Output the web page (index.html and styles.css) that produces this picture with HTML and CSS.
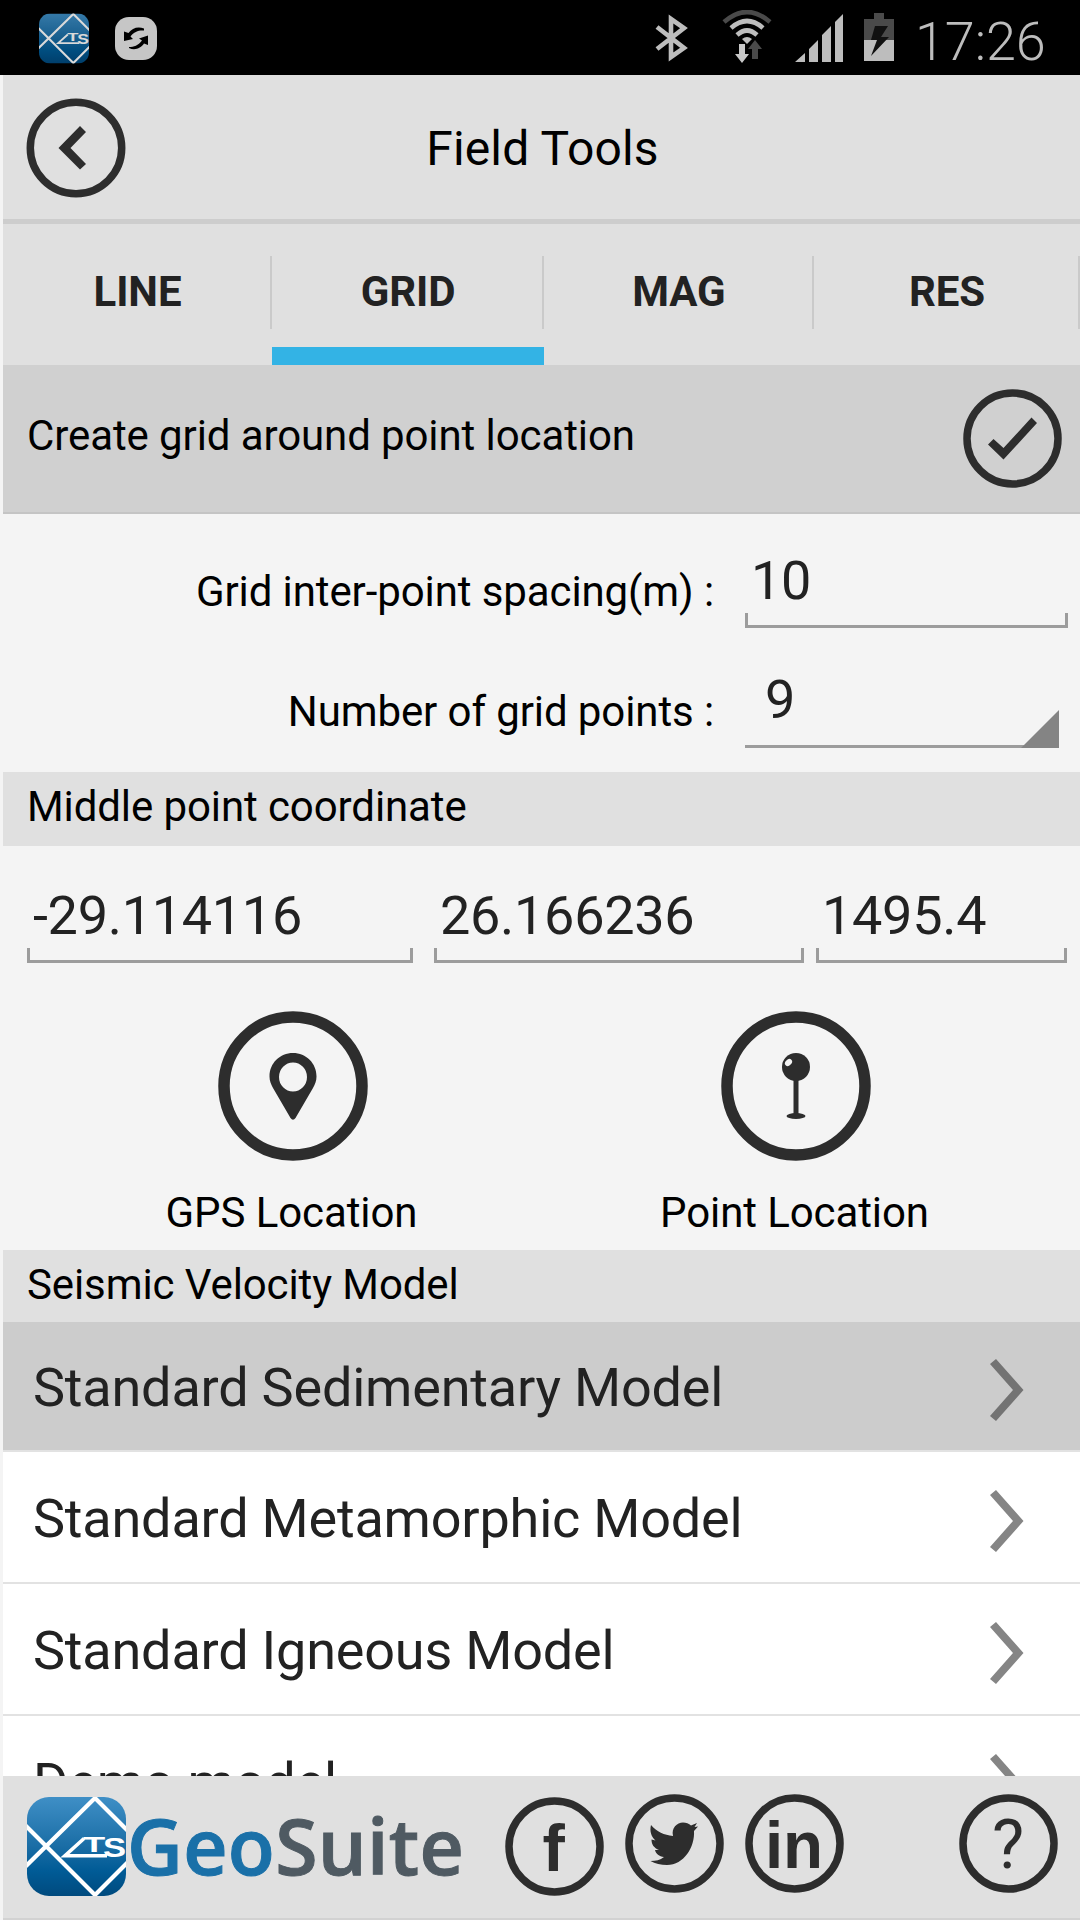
FILE: index.html
```html
<!doctype html>
<html lang="en">
<head>
  <meta charset="UTF-8">
  <meta name="viewport" content="width=device-width, initial-scale=1.0">
  <title>Field Tools</title>
  <link rel="stylesheet" href="styles.css">
</head>
<body>
  <svg width="0" height="0" class="defs">
    <defs>
      <linearGradient id="blue" x1="0" y1="0" x2="0" y2="1">
        <stop offset="0" stop-color="#3f8fc6"/>
        <stop offset="0.5" stop-color="#1a6da5"/>
        <stop offset="0.75" stop-color="#005b96"/>
        <stop offset="1" stop-color="#004a7e"/>
      </linearGradient>
      <clipPath id="tile"><rect width="99" height="99" rx="22"/></clipPath>
      <symbol id="logo" viewBox="0 0 99 99">
        <g clip-path="url(#tile)">
          <rect width="99" height="99" fill="url(#blue)"/>
          <path d="M-2 70L68 1L101 34M-2 28L68 98L101 65" fill="none" stroke="#fff" stroke-width="4.2"/>
          <path d="M80 58.7H38L57 41.500" fill="none" stroke="#fff" stroke-width="3.6"/>
          <text x="56" y="55" class="logo-text" font-size="21.500" textLength="22" lengthAdjust="spacingAndGlyphs">T</text>
          <text x="76" y="60.200" class="logo-text" font-size="28" textLength="23" lengthAdjust="spacingAndGlyphs">S</text>
        </g>
      </symbol>
      <symbol id="chevron" viewBox="0 0 34 62">
        <path d="M6 0L33.500 31L6 62L0 57L23 31L0 5Z" fill="currentColor"/>
      </symbol>
    </defs>
  </svg>

  <div class="status-bar">
    <svg class="app-icon" width="50" height="51" preserveAspectRatio="none"><use href="#logo" width="50" height="51"/></svg>
    <svg class="sync" width="42" height="43" viewBox="0 0 42 43">
      <rect width="42" height="43" rx="14" fill="#c6c6c6"/>
      <path d="M29 11.500C23 9 17 11 13.500 16L9 14.500V24L18 22L15.500 19.500C19 14.500 24 13 29 13.500Z" fill="#000"/>
      <path d="M14 31C20 34 26 31 29 26.500L33 28V18.500L24 21.500L27 23.500C23 28.500 19 30 14 30Z" fill="#000"/>
    </svg>
    <div class="status-right">
      <svg width="34" height="50" viewBox="0 0 34 50">
        <path d="M2 14L29 35L16 44V6L29 15L2 36" fill="none" stroke="#bdbdbd" stroke-width="4.600"/>
      </svg>
      <svg class="wifi" width="50" height="54" viewBox="0 0 50 54">
        <g fill="none" stroke="#bdbdbd" stroke-width="4.600">
          <path d="M2 12Q25 -8 48 12" stroke="#4a4a4a"/>
          <path d="M9 18Q25 4 41 18"/>
          <path d="M15 25Q25 16 35 25"/>
        </g>
        <path d="M20 29Q25 25 30 29L25 34Z" fill="#bdbdbd"/>
        <path d="M17 34H23V44H27L20 53L13 44H17Z" fill="#c8c8c8"/>
        <path d="M30 49V39H26L33 30L40 39H36V49Z" fill="#4a4a4a"/>
      </svg>
      <svg class="signal" width="48" height="48" viewBox="0 0 48 48" fill="#bdbdbd">
        <path d="M0 48L10 39V48ZM14 48V35L23 26V48ZM27 48V21L36 12V48ZM40 48V8L48 0V48Z"/>
      </svg>
      <svg class="battery" width="30" height="48" viewBox="0 0 30 48">
        <path d="M10 0H20V6H30V27H0V6H10Z" fill="#4a4a4a"/>
        <path d="M0 27H30V48H0Z" fill="#bdbdbd"/>
        <path d="M11 13H24L17 24H25L7 43L13 27H7Z" fill="#111"/>
      </svg>
      <span class="time">17:26</span>
    </div>
  </div>

  <div class="app">
    <header class="header">
      <svg class="back" width="100" height="100" viewBox="0 0 100 100">
        <circle cx="50" cy="50" r="45.700" class="ring"/>
        <path d="M54 28L60 34L44.500 50L60 66L54 71.500L32.500 50Z" fill="#2d2d2d"/>
      </svg>
      <h1>Field Tools</h1>
    </header>

    <nav class="tabs">
      <div class="tab">LINE</div>
      <div class="tab active">GRID</div>
      <div class="tab">MAG</div>
      <div class="tab">RES</div>
    </nav>

    <div class="create">
      <span>Create grid around point location</span>
      <svg width="99" height="99" viewBox="0 0 99 99">
        <circle cx="49.500" cy="49.500" r="45.500" class="ring"/>
        <path d="M25 55.500L30.500 50L40.500 59L68.500 28.500L74 34L40.500 70.500Z" fill="#2d2d2d"/>
      </svg>
    </div>

    <div class="form">
      <div class="form-row">
        <label>Grid inter-point spacing(m) :</label>
        <div class="field spacing">10</div>
      </div>
      <div class="form-row points-row">
        <label>Number of grid points :</label>
        <div class="select">9</div>
      </div>
    </div>

    <h2 class="band">Middle point coordinate</h2>
    <div class="coords">
      <div class="field">-29.114116</div>
      <div class="field">26.166236</div>
      <div class="field">1495.4</div>
    </div>
    <div class="locations">
      <div class="location">
        <svg width="150" height="150" viewBox="0 0 150 150">
          <circle cx="75" cy="75" r="69" class="ring thick"/>
          <path d="M75 42C62 42 51.500 52 51.500 65.500C51.500 70 53 73 55 77L72.500 107Q75 110.500 77.500 107L95 77C97 73 98.500 70 98.500 65.500C98.500 52 88 42 75 42ZM75 51.500A14 14.500 0 0 1 75 80.500A14 14.500 0 0 1 75 51.500Z" fill="#2d2d2d" fill-rule="evenodd"/>
        </svg>
        <span>GPS Location</span>
      </div>
      <div class="location">
        <svg width="150" height="150" viewBox="0 0 150 150">
          <circle cx="75" cy="75" r="69" class="ring thick"/>
          <g fill="#2d2d2d">
            <circle cx="75" cy="56" r="14"/>
            <rect x="72.500" y="68" width="5" height="37"/>
            <ellipse cx="75" cy="105" rx="9.500" ry="3"/>
          </g>
          <ellipse cx="67.500" cy="51.500" rx="3" ry="4" transform="rotate(45 67.500 51.500)" fill="#f4f4f4"/>
        </svg>
        <span>Point Location</span>
      </div>
    </div>

    <h2 class="band seismic">Seismic Velocity Model</h2>
    <div class="models">
      <div class="model selected"><span>Standard Sedimentary Model</span><svg width="34" height="62"><use href="#chevron"/></svg></div>
      <div class="model"><span>Standard Metamorphic Model</span><svg width="34" height="62"><use href="#chevron"/></svg></div>
      <div class="model"><span>Standard Igneous Model</span><svg width="34" height="62"><use href="#chevron"/></svg></div>
      <div class="model"><span>Demo model</span><svg width="34" height="62"><use href="#chevron"/></svg></div>
    </div>

    <footer class="footer">
      <svg class="foot-logo" width="99" height="99"><use href="#logo"/></svg>
      <div class="brand"><span class="geo">Geo</span><span>Suite</span></div>
      <svg class="facebook" width="99" height="99" viewBox="0 0 99 99">
        <circle cx="49.500" cy="49.500" r="45.500" class="ring"/>
        <text x="37.500" y="74" class="social" font-size="67">f</text>
      </svg>
      <svg class="twitter" width="99" height="99" viewBox="0 0 99 99">
        <circle cx="49.500" cy="49.500" r="45.500" class="ring"/>
        <path d="M26 31C32 38 39 41 48 42C46 34 52 28.500 58 28.500C61 28.500 64 29.500 66 31.500L72 29L69.500 33L73 32.500L69 37C70 53 59 71 42 71C36 71 30 69.500 25.500 67C31 67 35 66 39 63C34 62.500 31 60 30 56H34C29 54 26.500 50.500 26.500 45.500L30.500 46.500C26 42.500 24.500 37 26 31Z" fill="#2d2d2d"/>
      </svg>
      <svg class="linkedin" width="99" height="99" viewBox="0 0 99 99">
        <circle cx="49.500" cy="49.500" r="45.500" class="ring"/>
        <text x="20" y="74" class="social" font-size="67" textLength="58" lengthAdjust="spacingAndGlyphs">in</text>
      </svg>
      <svg class="help" width="99" height="99" viewBox="0 0 99 99">
        <circle cx="49.500" cy="49.500" r="45.500" class="ring"/>
        <text x="49" y="73.500" class="question" font-size="68" text-anchor="middle">?</text>
      </svg>
    </footer>
  </div>
</body>
</html>
```

FILE: styles.css
```css
* {
  margin: 0;
  padding: 0;
  box-sizing: border-box;
}
body {
  width: 1080px;
  height: 1920px;
  overflow: hidden;
  background: #f4f4f4;
  color: #000;
  font-family: Roboto, sans-serif;
  font-size: 42px;
  line-height: 49px;
  letter-spacing: -0.1px;
}
svg {
  display: block;
  flex: none;
}
.defs {
  position: absolute;
}
.logo-text {
  fill: #fff;
  font-family: "Liberation Sans", sans-serif;
  font-weight: 700;
}
.ring {
  fill: none;
  stroke: #2d2d2d;
  stroke-width: 7.5px;
}
.ring.thick {
  stroke-width: 11.5px;
}

.status-bar {
  height: 75px;
  background: #000;
  display: flex;
  align-items: flex-start;
  padding: 13px 35px 0 39px;
}
.app-icon {
  opacity: 0.85;
}
.sync {
  margin: 4px 0 0 26px;
}
.status-right {
  margin-left: auto;
  display: flex;
}
.wifi {
  margin: -3px 0 0 33px;
}
.signal {
  margin: 1px 0 0 23px;
}
.battery {
  margin-left: 21px;
}
.time {
  margin: -3px 0 0 21px;
  width: 130px;
  color: #bdbdbd;
  font-size: 54px;
  line-height: 63px;
  font-weight: 300;
  white-space: nowrap;
}

.app {
  padding-left: 3px;
}
.header {
  height: 149px;
  background: #e0e0e0;
  border-bottom: 5px solid #cdcdcd;
  display: grid;
  grid-template-columns: 124px 1fr 122px;
  align-items: center;
}
.back {
  margin: 2px 0 0 23px;
}
h1 {
  padding-top: 3px;
  font-size: 48px;
  font-weight: 400;
  line-height: 56px;
  letter-spacing: 0.15px;
  text-align: center;
}

.tabs {
  height: 141px;
  background: #e0e0e0;
  display: grid;
  grid-template-columns: 269px 272px 270px 266px;
}
.tab {
  position: relative;
  padding-top: 43px;
  color: #222;
  font-weight: 700;
  text-align: center;
}
.tab::after {
  content: '';
  position: absolute;
  top: 32px;
  right: 0;
  width: 2px;
  height: 73px;
  background: #cacaca;
}
.tab.active {
  border-bottom: 18px solid #33b3e5;
}

.create {
  height: 149px;
  background: #d0d0d0;
  border-bottom: 2px solid #c4c4c4;
  display: flex;
  justify-content: space-between;
  align-items: center;
  padding: 0 18px 0 24px;
}
.create span {
  padding-bottom: 6px;
}

.form {
  height: 258px;
}
.form-row {
  height: 114px;
  display: flex;
  align-items: flex-end;
}
.points-row {
  height: 120px;
}
.form-row label {
  width: 711px;
  padding-bottom: 12px;
  text-align: right;
}
.field,
.select {
  position: relative;
  color: #222;
  font-size: 54px;
  line-height: 63px;
  letter-spacing: -0.3px;
  padding: 0 0 16px 6px;
}
.field::after {
  content: '';
  position: absolute;
  left: 0;
  right: 0;
  bottom: 0;
  height: 12px;
  border: solid #9c9c9c;
  border-width: 0 3px 3px;
}
.form-row .field,
.form-row .select {
  margin-left: 31px;
}
.spacing {
  width: 323px;
}
.select {
  width: 314px;
  padding: 0 0 14px 20px;
  border-bottom: 3px solid #9c9c9c;
}
.select::after {
  content: '';
  position: absolute;
  right: 0;
  bottom: -3px;
  width: 38px;
  height: 38px;
  background: #848484;
  clip-path: polygon(100% 0, 100% 100%, 0 100%);
}

.band {
  height: 74px;
  background: #e0e0e0;
  padding: 10px 24px 0;
  font-size: 42px;
  font-weight: 400;
}
.band.seismic {
  height: 72px;
}

.coords {
  height: 117px;
  display: grid;
  grid-template-columns: 386px 370px 251px;
  column-gap: 0;
  align-items: end;
  padding-left: 24px;
}
.coords .field:nth-child(2) {
  margin-left: 21px;
  margin-right: -21px;
}
.coords .field:nth-child(3) {
  margin-left: 33px;
  margin-right: -33px;
}

.locations {
  height: 287px;
  display: flex;
  gap: 3px;
  padding: 48px 0 0 40px;
}
.location {
  width: 500px;
  display: flex;
  flex-direction: column;
  align-items: center;
}
.location span {
  margin-top: 27px;
  padding-right: 3px;
}

.models {
  height: 454px;
  overflow: hidden;
  background: #fff;
}
.model {
  height: 132px;
  border-bottom: 2px solid #e2e2e2;
  display: flex;
  align-items: center;
  justify-content: space-between;
  padding: 7px 56px 0 30px;
  color: #222;
  font-size: 54px;
  line-height: 63px;
  letter-spacing: -0.2px;
}
.model span {
  padding-bottom: 5px;
}
.model svg {
  color: #858585;
}
.model.selected {
  height: 130px;
  background: #ccc;
}
.model.selected svg {
  color: #737373;
}

.footer {
  height: 144px;
  background: #e0e0e0;
  border-bottom: 2px solid #d2d2d2;
  display: flex;
  align-items: flex-start;
  padding: 18px 22px 0 24px;
}
.foot-logo,
.facebook {
  margin-top: 3px;
}
.brand {
  width: 379px;
  padding-left: 1px;
  color: #4f5a62;
  font-family: "Open Sans", sans-serif;
  font-size: 77px;
  font-weight: 600;
  line-height: 104px;
  letter-spacing: 0.3px;
  white-space: nowrap;
  -webkit-text-stroke: 1px currentColor;
}
.geo {
  color: #1a70a8;
}
.twitter,
.linkedin {
  margin-left: 21px;
}
.help {
  margin-left: auto;
}
.social {
  fill: #2d2d2d;
  font-family: "Liberation Sans", sans-serif;
  font-weight: 700;
}
.question {
  fill: #2d2d2d;
  font-family: Roboto, sans-serif;
}
```
